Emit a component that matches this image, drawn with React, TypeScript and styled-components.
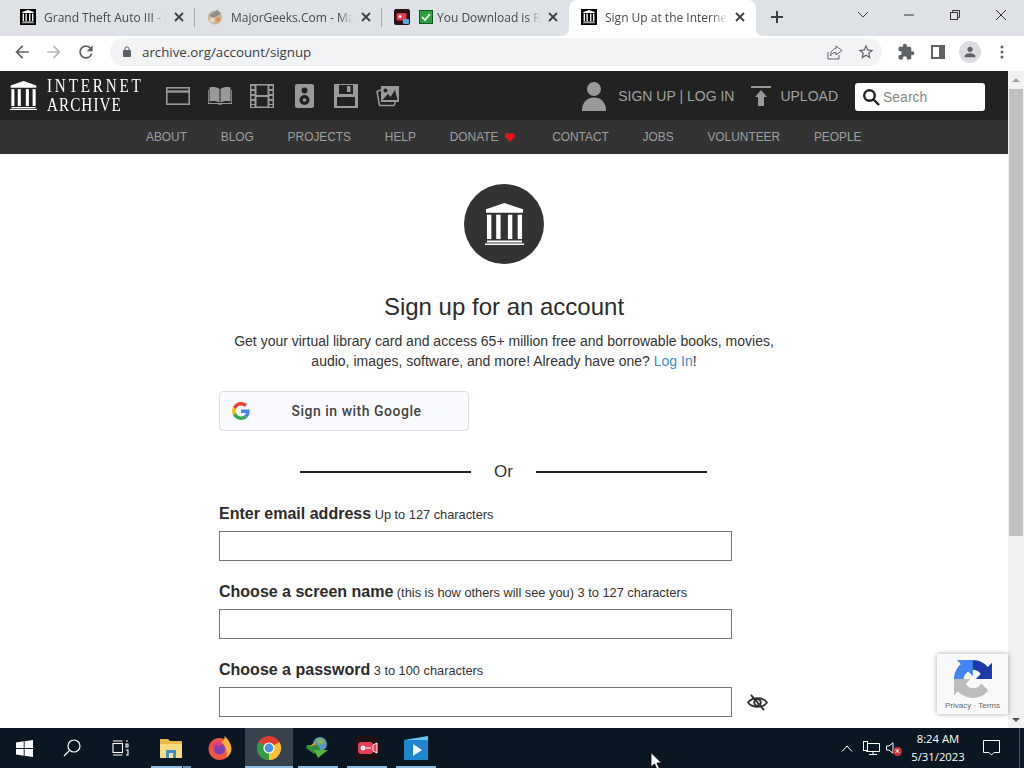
import styled, { createGlobalStyle } from 'styled-components'

const GlobalStyle = createGlobalStyle`
  html, body {
    margin: 0;
    padding: 0;
    height: 100%;
    overflow: hidden;
  }
  * {
    box-sizing: border-box;
  }
`

const Temple = ({ size, color }: { size: number; color: string }) => (
  <svg width={size} height={size * 1.1} viewBox='0 0 40 44' fill={color}>
    <path d='M20 0 L39 6.5 V10 H1 V6.5 Z' />
    <rect x='2' y='12' width='4.5' height='25' />
    <rect x='11.5' y='12' width='4.5' height='25' />
    <rect x='23.5' y='12' width='4.5' height='25' />
    <rect x='33.5' y='12' width='4.5' height='25' />
    <rect x='2' y='38.5' width='36' height='2' />
    <rect x='0' y='41.5' width='40' height='2.5' />
  </svg>
)

const Glyph = ({ d, size = 20, color = '#5f6368' }: { d: string; size?: number; color?: string }) => (
  <svg width={size} height={size} viewBox='0 0 24 24' fill={color}>
    <path d={d} />
  </svg>
)

const CloseX = () => (
  <svg width='10' height='10' viewBox='0 0 10 10' stroke='#3c4043' strokeWidth='1.8'>
    <path d='M1 1 L9 9 M9 1 L1 9' />
  </svg>
)

const tabs = [
  { title: 'Grand Theft Auto III - Playthrough', icon: 'temple', divider: true },
  { title: 'MajorGeeks.Com - MajorGeeks', icon: 'geeks', divider: true },
  { title: 'You Download is Ready', icon: 'rec' },
  { title: 'Sign Up at the Internet Archive', icon: 'temple', active: true },
]

const TabIcon = ({ kind }: { kind: string }) => {
  if (kind === 'temple') {
    return (
      <FaviconBox>
        <Temple size={12} color='#fff' />
      </FaviconBox>
    )
  }
  if (kind === 'geeks') {
    return (
      <svg width='16' height='16' viewBox='0 0 16 16'>
        <circle cx='8' cy='8.5' r='7' fill='#c9b595' />
        <path d='M2.5 6 L10.5 1 L14 4.5 L6 9 Z' fill='#8b8f8c' />
        <circle cx='5.5' cy='11' r='2.4' fill='#ecdcb8' />
        <circle cx='11' cy='10.5' r='2.2' fill='#d98f56' />
      </svg>
    )
  }
  return (
    <>
      <svg width='16' height='16' viewBox='0 0 16 16'>
        <rect width='16' height='16' rx='2' fill='#2a1118' />
        <rect x='2.5' y='4' width='10' height='7.5' rx='1.5' fill='#e8384f' />
        <circle cx='6' cy='7.5' r='1.5' fill='#fff' />
        <rect x='9' y='10' width='6' height='5' rx='1' fill='#5ba7e0' />
      </svg>
      <CheckBox width='14' height='14' viewBox='0 0 14 14'>
        <rect x='0.5' y='0.5' width='13' height='13' fill='#2f9e3f' stroke='#15551f' />
        <path d='M3 7 L6 10 L11 4' fill='none' stroke='#fff' strokeWidth='1.6' />
      </CheckBox>
    </>
  )
}

const siteIcons = [
  <svg key='web' width='24' height='18' viewBox='0 0 24 18' fill='none' stroke='#999' strokeWidth='1.6'>
    <rect x='0.8' y='0.8' width='22.4' height='16.4' />
    <path d='M1 4.5 H23' strokeWidth='2.4' />
  </svg>,
  <svg key='book' width='24' height='18' viewBox='0 0 24 18' fill='#999'>
    <path d='M1.5 0.5 C4.5 -0.5 9 0 11.5 2 V15.5 C9 14 4.5 13.5 1.5 14.5 Z M12.5 2 C15 0 19.5 -0.5 22.5 0.5 V14.5 C19.5 13.5 15 14 12.5 15.5 Z' />
    <path d='M0 3 V17 H9 C10 17 11 18 12 18 C13 18 14 17 15 17 H24 V3 H23.2 V16 H0.8 V3 Z' />
  </svg>,
  <svg key='film' width='24' height='24' viewBox='0 0 24 24' fill='#999'>
    <path d='M0 0 H24 V24 H0 Z M1.5 2 V5 H4.5 V2 Z M1.5 7 V10 H4.5 V7 Z M1.5 12 V15 H4.5 V12 Z M1.5 17 V20 H4.5 V17 Z M1.5 21 V23 H4.5 V21 Z M19.5 2 V5 H22.5 V2 Z M19.5 7 V10 H22.5 V7 Z M19.5 12 V15 H22.5 V12 Z M19.5 17 V20 H22.5 V17 Z M19.5 21 V23 H22.5 V21 Z M6.5 1.5 V11 H17.5 V1.5 Z M6.5 13 V22.5 H17.5 V13 Z' fillRule='evenodd' />
  </svg>,
  <svg key='audio' width='19' height='24' viewBox='0 0 19 24'>
    <rect width='19' height='24' rx='2' fill='#999' />
    <circle cx='9.5' cy='6.5' r='3' fill='#222' />
    <circle cx='9.5' cy='16' r='5' fill='#222' />
    <circle cx='9.5' cy='16' r='1.8' fill='#999' />
  </svg>,
  <svg key='disk' width='24' height='24' viewBox='0 0 24 24' fill='#999'>
    <path d='M0 0 H24 V24 H0 Z M5 1 V10 H19 V1 Z M3 13 V22 H21 V13 Z' fillRule='evenodd' />
    <rect x='13' y='2' width='3.5' height='6' />
  </svg>,
  <svg key='image' width='24' height='22' viewBox='0 0 24 22' fill='none' stroke='#999' strokeWidth='1.5'>
    <path d='M5 5 L1 6.5 L3.5 20.5 L18 20.5 L19.5 17' />
    <rect x='5' y='1' width='18' height='16' fill='#999' stroke='none' />
    <circle cx='9.5' cy='5.5' r='2' fill='#222' stroke='none' />
    <path d='M6.5 15 L12 9 L14.5 12 L19 5 L21.5 15 Z' fill='#222' stroke='none' />
  </svg>,
]

const navItems = ['ABOUT', 'BLOG', 'PROJECTS', 'HELP', 'DONATE', 'CONTACT', 'JOBS', 'VOLUNTEER', 'PEOPLE']

const App = () => (
  <>
    <GlobalStyle />
    <Screen>
      <TabStrip>
        {tabs.map((tab) => (
          <Tab key={tab.title} $active={!!tab.active} $divider={!!tab.divider}>
            <TabIcon kind={tab.icon} />
            <TabTitle>{tab.title}</TabTitle>
            <CloseX />
          </Tab>
        ))}
        <NewTab>
          <svg width='12' height='12' viewBox='0 0 12 12' stroke='#3c4043' strokeWidth='2'>
            <path d='M6 0 V12 M0 6 H12' />
          </svg>
        </NewTab>
        <WindowControls>
          <WindowButton>
            <svg width='12' height='8' viewBox='0 0 12 8' fill='none' stroke='#444' strokeWidth='1'>
              <path d='M1 1 L6 6 L11 1' />
            </svg>
          </WindowButton>
          <WindowButton>
            <svg width='10' height='2' viewBox='0 0 10 2' stroke='#333' strokeWidth='1'>
              <path d='M0 1 H10' />
            </svg>
          </WindowButton>
          <WindowButton>
            <svg width='10' height='10' viewBox='0 0 10 10' fill='none' stroke='#333' strokeWidth='1'>
              <rect x='0.5' y='2.5' width='7' height='7' />
              <path d='M2.5 2.5 V0.5 H9.5 V7.5 H7.5' />
            </svg>
          </WindowButton>
          <WindowButton>
            <svg width='12' height='12' viewBox='0 0 12 12' stroke='#333' strokeWidth='1'>
              <path d='M1 1 L11 11 M11 1 L1 11' />
            </svg>
          </WindowButton>
        </WindowControls>
      </TabStrip>

      <Toolbar>
        <ToolButton>
          <Glyph d='M20 11H7.83l5.59-5.59L12 4l-8 8 8 8 1.41-1.41L7.83 13H20v-2z' />
        </ToolButton>
        <ToolButton>
          <Glyph color='#b4b7bb' d='M4 11h12.17l-5.59-5.59L12 4l8 8-8 8-1.41-1.41L16.17 13H4v-2z' />
        </ToolButton>
        <ToolButton>
          <Glyph d='M17.65 6.35C16.2 4.9 14.21 4 12 4c-4.42 0-7.99 3.58-7.99 8s3.57 8 7.99 8c3.73 0 6.84-2.55 7.73-6h-2.08c-.82 2.33-3.04 4-5.65 4-3.31 0-6-2.69-6-6s2.69-6 6-6c1.66 0 3.14.69 4.22 1.78L13 11h7V4l-2.35 2.35z' />
        </ToolButton>
        <Omnibox>
          <Glyph size={12} d='M18 8h-1V6c0-2.76-2.24-5-5-5S7 3.24 7 6v2H6c-1.1 0-2 .9-2 2v10c0 1.1.9 2 2 2h12c1.1 0 2-.9 2-2V10c0-1.1-.9-2-2-2zM9 6c0-1.66 1.34-3 3-3s3 1.34 3 3v2H9V6z' />
          <Address>archive.org/account/signup</Address>
          <OmniActions>
            <svg width='16' height='16' viewBox='0 0 16 16' fill='none' stroke='#5f6368' strokeWidth='1'>
              <path d='M1 8 V15 H12 V11' />
              <path d='M9 2 L15 6.5 L9 11 V8.5 C6 8.5 4.5 10 3.5 12 C3.5 8 5.5 5 9 4.5 Z' />
            </svg>
            <Glyph size={18} d='M22 9.24l-7.19-.62L12 2 9.19 8.63 2 9.24l5.46 4.73L5.82 21 12 17.27 18.18 21l-1.63-7.03L22 9.24zM12 15.4l-3.76 2.27 1-4.28-3.32-2.88 4.38-.38L12 6.1l1.71 4.04 4.38.38-3.32 2.88 1 4.28L12 15.4z' />
          </OmniActions>
        </Omnibox>
        <ToolActions>
          <Glyph size={18} d='M20.5 11H19V7c0-1.1-.9-2-2-2h-4V3.5C13 2.12 11.88 1 10.5 1S8 2.12 8 3.5V5H4c-1.1 0-1.99.9-1.99 2v3.8H3.5c1.49 0 2.7 1.21 2.7 2.7s-1.21 2.7-2.7 2.7H2V20c0 1.1.9 2 2 2h3.8v-1.5c0-1.49 1.21-2.7 2.7-2.7 1.49 0 2.7 1.21 2.7 2.7V22H17c1.1 0 2-.9 2-2v-4h1.5c1.38 0 2.5-1.12 2.5-2.5S21.88 11 20.5 11z' />
          <svg width='14' height='14' viewBox='0 0 14 14'>
            <path d='M0 0 H14 V14 H0 Z M2 2 V12 H8 V2 Z' fill='#5f6368' fillRule='evenodd' />
          </svg>
          <Avatar>
            <Glyph size={16} d='M12 12c2.2 0 4-1.8 4-4s-1.8-4-4-4-4 1.8-4 4 1.8 4 4 4zm0 2c-2.7 0-8 1.3-8 4v2h16v-2c0-2.7-5.3-4-8-4z' />
          </Avatar>
          <svg width='4' height='14' viewBox='0 0 4 14' fill='#5f6368'>
            <circle cx='2' cy='2' r='1.5' />
            <circle cx='2' cy='7' r='1.5' />
            <circle cx='2' cy='12' r='1.5' />
          </svg>
        </ToolActions>
      </Toolbar>

      <Viewport>
        <Page>
          <TopBar>
            <Logo>
              <Temple size={27} color='#fff' />
              <LogoText>
                <LogoLine $spacing={3.5}>INTERNET</LogoLine>
                <LogoLine $spacing={1.3}>ARCHIVE</LogoLine>
              </LogoText>
            </Logo>
            <MediaIcons>
              {siteIcons.map((icon) => (
                <MediaIcon key={icon.key}>{icon}</MediaIcon>
              ))}
            </MediaIcons>
            <UserArea>
              <svg width='26' height='30' viewBox='0 0 28 32' fill='#999' preserveAspectRatio='none'>
                <circle cx='14' cy='8.5' r='7.5' />
                <path d='M1 32 C1 22 7 17.5 14 17.5 C21 17.5 27 22 27 32 Z' />
              </svg>
              <TopLink>SIGN UP | LOG IN</TopLink>
            </UserArea>
            <UploadArea>
              <svg width='20' height='20' viewBox='0 0 20 20' fill='#999'>
                <rect width='20' height='2' />
                <path d='M10 4 L16 11 H13 V20 H7 V11 H4 Z' />
              </svg>
              <TopLink>UPLOAD</TopLink>
            </UploadArea>
            <SearchBox>
              <svg width='18' height='18' viewBox='0 0 18 18' fill='none' stroke='#222' strokeWidth='2.4'>
                <circle cx='7.5' cy='7.5' r='5.3' />
                <path d='M11.5 11.5 L17 17' />
              </svg>
              <SearchText>Search</SearchText>
            </SearchBox>
          </TopBar>
          <NavBar>
            {navItems.map((item) => (
              <NavItem key={item}>
                {item}
                {item === 'DONATE' && (
                  <Heart width='10' height='9' viewBox='0 0 10 9' fill='#f0101c'>
                    <path d='M5 9 L0.6 4.4 C-0.6 2.6 0.4 0 2.6 0 C3.6 0 4.5 0.6 5 1.5 C5.5 0.6 6.4 0 7.4 0 C9.6 0 10.6 2.6 9.4 4.4 Z' />
                  </Heart>
                )}
              </NavItem>
            ))}
          </NavBar>

          <Form>
            <Badge>
              <Temple size={39} color='#fff' />
            </Badge>
            <Heading>Sign up for an account</Heading>
            <Intro>
              Get your virtual library card and access 65+ million free and borrowable books, movies, audio, images,
              software, and more! Already have one? <IntroLink>Log In</IntroLink>!
            </Intro>
            <GoogleButton>
              <svg width='18' height='18' viewBox='0 0 48 48'>
                <path fill='#EA4335' d='M24 9.5c3.54 0 6.71 1.22 9.21 3.6l6.85-6.85C35.9 2.38 30.47 0 24 0 14.62 0 6.51 5.38 2.56 13.22l7.98 6.19C12.43 13.72 17.74 9.5 24 9.5z' />
                <path fill='#4285F4' d='M46.98 24.55c0-1.57-.15-3.09-.38-4.55H24v9.02h12.94c-.58 2.96-2.26 5.48-4.78 7.18l7.73 6c4.51-4.18 7.09-10.36 7.09-17.65z' />
                <path fill='#FBBC05' d='M10.53 28.59c-.48-1.45-.76-2.99-.76-4.59s.27-3.14.76-4.59l-7.98-6.19C.92 16.46 0 20.12 0 24c0 3.88.92 7.54 2.56 10.78l7.97-6.19z' />
                <path fill='#34A853' d='M24 48c6.48 0 11.93-2.13 15.89-5.81l-7.73-6c-2.15 1.45-4.92 2.3-8.16 2.3-6.26 0-11.57-4.22-13.47-9.91l-7.98 6.19C6.51 42.62 14.62 48 24 48z' />
              </svg>
              <GoogleLabel>Sign in with Google</GoogleLabel>
            </GoogleButton>
            <OrRow>
              <OrLine />
              <OrText>Or</OrText>
              <OrLine />
            </OrRow>
            <Field>
              <FieldLabel>
                <strong>Enter email address</strong> Up to 127 characters
              </FieldLabel>
              <FieldInput />
            </Field>
            <Field>
              <FieldLabel>
                <strong>Choose a screen name</strong> (this is how others will see you) 3 to 127 characters
              </FieldLabel>
              <FieldInput />
            </Field>
            <Field>
              <FieldLabel>
                <strong>Choose a password</strong> 3 to 100 characters
              </FieldLabel>
              <PasswordRow>
                <FieldInput />
                <svg width='21' height='17' viewBox='0 0 22 18' fill='none' stroke='#333' strokeWidth='2'>
                  <path d='M1 9 C5 3 17 3 21 9 C17 15 5 15 1 9 Z' />
                  <circle cx='11' cy='9' r='3.5' />
                  <path d='M4 1 L18 17' />
                </svg>
              </PasswordRow>
            </Field>
          </Form>
          <Recaptcha>
            <svg width='38' height='38' viewBox='0 0 64 64'>
              <path fill='#1c3aa9' d='M64 31.955l-.033-1.37V4.687l-7.16 7.16C50.948 4.674 42.033.093 32.05.093c-10.4 0-19.622 4.96-25.458 12.64l11.736 11.86a15.55 15.55 0 0 1 4.754-5.334c2.05-1.6 4.952-2.906 8.968-2.906.485 0 .86.057 1.135.163 4.976.393 9.288 3.14 11.828 7.124l-8.307 8.307c10.522-.04 22.4-.066 27.295.005' />
              <path fill='#4285f4' d='M31.862.094l-1.37.033H4.594l7.16 7.16C4.58 13.147 0 22.06 0 32.046c0 10.4 4.96 19.622 12.64 25.458l11.86-11.736a15.55 15.55 0 0 1-5.334-4.754c-1.6-2.05-2.906-4.952-2.906-8.968 0-.485.057-.86.163-1.135.393-4.976 3.14-9.288 7.124-11.828l8.307 8.307c-.04-10.522-.066-22.4.005-27.295' />
              <path fill='#bdbdbd' d='M.001 32.045l.033 1.37V59.3l7.16-7.16c6.14 7.173 15.056 11.753 25.04 11.753 10.4 0 19.622-4.96 25.458-12.64L45.96 39.4a15.55 15.55 0 0 1-4.754 5.334c-2.05 1.6-4.952 2.906-8.968 2.906-.485 0-.86-.057-1.135-.163-4.976-.393-9.288-3.14-11.828-7.124l8.307-8.307C17.06 32.085 5.18 32.11.29 32.04' />
            </svg>
            <RecaptchaLinks>Privacy · Terms</RecaptchaLinks>
          </Recaptcha>
        </Page>
        <Scrollbar>
          <ScrollArrow $up />
          <ScrollTrack>
            <ScrollThumb />
          </ScrollTrack>
          <ScrollArrow />
        </Scrollbar>
      </Viewport>

      <Taskbar>
        <TaskItem>
          <svg width='17' height='17' viewBox='0 0 17 17' fill='#fff'>
            <path d='M0 2.4 L7.7 1.3 V8 H0 Z M8.6 1.2 L17 0 V8 H8.6 Z M0 9 H7.7 V15.7 L0 14.6 Z M8.6 9 H17 V17 L8.6 15.8 Z' />
          </svg>
        </TaskItem>
        <TaskItem>
          <svg width='18' height='18' viewBox='0 0 18 18' fill='none' stroke='#fff' strokeWidth='1.2'>
            <circle cx='11' cy='7' r='6' />
            <path d='M6.6 11.4 L1 17' />
          </svg>
        </TaskItem>
        <TaskItem>
          <svg width='17' height='16' viewBox='0 0 17 16' fill='none' stroke='#fff' strokeWidth='1.1'>
            <rect x='1' y='3.5' width='9.5' height='9' />
            <path d='M1 1 H10.5 M1 15 H10.5 M14 1 H16 M14 4 H16 V7 H14 Z M14 10 H16 V15 H14' />
          </svg>
        </TaskItem>
        <AppGroup>
          <AppItem $running $stacked>
            <svg width='22' height='20' viewBox='0 0 22 20'>
              <path d='M0 1 H8 L10 3 H22 V20 H0 Z' fill='#e9b949' />
              <rect y='6' width='22' height='14' fill='#fbdc7c' />
              <rect x='6' y='12' width='10' height='8' fill='#3f8fc9' />
              <rect x='9' y='15' width='4' height='5' fill='#f5e3a5' />
            </svg>
          </AppItem>
          <AppItem>
            <svg width='24' height='24' viewBox='0 0 24 24'>
              <circle cx='11.5' cy='13' r='11' fill='#f1543f' />
              <path d='M16.5 0 C20 3 23.5 8 23.5 13 C23.5 16 21.5 20 18 22 C20.5 16 17 8 13 6.5 C15.5 5.5 17 3 16.5 0 Z' fill='#fcb23b' />
              <circle cx='11.5' cy='13' r='5.5' fill='#7f3fb8' />
              <path d='M4 9 C7 5 12 5 15 8 L12 10.5 L8 9.5 L6 13 Z' fill='#e4397d' />
            </svg>
          </AppItem>
          <AppItem $active $running>
            <svg width='24' height='24' viewBox='0 0 24 24'>
              <circle cx='12' cy='12' r='12' fill='#e33b2e' />
              <path d='M12 12 L22.4 6 A12 12 0 0 1 12 24 Z' fill='#fbc02d' />
              <path d='M12 12 L12 24 A12 12 0 0 1 1.6 6 Z' fill='#2f9e44' />
              <circle cx='12' cy='12' r='5.6' fill='#fff' />
              <circle cx='12' cy='12' r='4.4' fill='#4a90e2' />
            </svg>
          </AppItem>
          <AppItem $running>
            <svg width='24' height='22' viewBox='0 0 24 22'>
              <circle cx='14' cy='7' r='7' fill='#5d94c8' />
              <path d='M10 2 C13 0 18 2 19 6 L13 8 Z' fill='#7fb356' />
              <path d='M12 8 H1 L0 11 L8 17 L14 13 Z' fill='#2e8f35' />
              <path d='M3 10 L9 5 L9 8 Z' fill='#e8a323' />
              <path d='M8 13 H22 L12 21 Z' fill='#55b53a' />
            </svg>
          </AppItem>
          <AppItem $running>
            <svg width='24' height='24' viewBox='0 0 24 24'>
              <rect width='24' height='24' rx='3' fill='#1e1217' />
              <rect x='3' y='6' width='15' height='12' rx='3' fill='#ea3d55' />
              <circle cx='8' cy='12' r='2.5' fill='#fff' />
              <path d='M11 12 H16 M18 9 L22 7 V17 L18 15 Z' stroke='#fff' fill='#ea3d55' />
            </svg>
          </AppItem>
          <AppItem $running>
            <svg width='24' height='24' viewBox='0 0 24 24'>
              <path d='M0 4 L24 0 V4 H0 Z' fill='#6cc5ef' />
              <rect y='4' width='24' height='20' fill='#1c86cf' />
              <path d='M9 8 L18 14 L9 20 Z' fill='#fff' />
            </svg>
          </AppItem>
        </AppGroup>
        <Tray>
          <TrayCell $width={24}>
            <svg width='12' height='7' viewBox='0 0 12 7' fill='none' stroke='#fff' strokeWidth='1'>
              <path d='M1 6.5 L6 1 L11 6.5' />
            </svg>
          </TrayCell>
          <TrayCell $width={24}>
            <svg width='17' height='14' viewBox='0 0 17 14' fill='none' stroke='#fff' strokeWidth='1'>
              <path d='M3.5 2.5 H16.5 V10.5 H3.5 Z M10 10.5 V13.5 M6 13.5 H14' />
              <rect x='0.5' y='0.5' width='4' height='9' fill='#0a1622' />
            </svg>
          </TrayCell>
          <TrayCell $width={24}>
            <VolumeIcon>
              <svg width='8' height='12' viewBox='0 0 8 12' fill='none' stroke='#fff' strokeWidth='1'>
                <path d='M0.5 4 H3 L7 0.8 V11.2 L3 8 H0.5 Z' />
              </svg>
              <Muted>×</Muted>
            </VolumeIcon>
          </TrayCell>
          <TrayCell $width={62}>
            <Clock>
              <span>8:24 AM</span>
              <span>5/31/2023</span>
            </Clock>
          </TrayCell>
          <TrayCell $width={44}>
            <svg width='17' height='16' viewBox='0 0 17 16' fill='none' stroke='#fff' strokeWidth='1'>
              <path d='M0.5 0.5 H16.5 V12.5 H11 L8.5 15 L6 12.5 H0.5 Z' />
            </svg>
          </TrayCell>
        </Tray>
        <ShowDesktop />
        <Cursor>
          <svg width='12' height='18' viewBox='0 0 12 18'>
            <path d='M1 0.5 V15 L4.5 12 L7 17.5 L9.5 16.5 L7 11 H11.5 Z' fill='#fff' stroke='#000' strokeWidth='0.8' />
          </svg>
        </Cursor>
      </Taskbar>
    </Screen>
  </>
)

const Screen = styled.div`
  width: 1024px;
  height: 768px;
  display: flex;
  flex-direction: column;
  overflow: hidden;
  background: #fff;
  font-family: 'Liberation Sans', Arial, sans-serif;
`

const TabStrip = styled.div`
  height: 36px;
  flex: none;
  display: flex;
  padding-left: 8px;
  background: #dee1e6;
`

const Tab = styled.div<{ $active: boolean; $divider: boolean }>`
  width: 187px;
  height: 36px;
  flex: none;
  display: flex;
  align-items: center;
  gap: 8px;
  position: relative;
  padding: 0 11px 2px 12px;
  background: ${(p) => (p.$active ? '#fff' : 'transparent')};
  border-radius: ${(p) => (p.$active ? '8px 8px 0 0' : '0')};

  &::before {
    content: '';
    display: ${(p) => (p.$active ? 'block' : 'none')};
    position: absolute;
    left: -8px;
    bottom: 0;
    width: 8px;
    height: 8px;
    background: radial-gradient(circle at 0 0, transparent 8px, #fff 8px);
  }

  &::after {
    content: '';
    display: ${(p) => (p.$divider || p.$active ? 'block' : 'none')};
    position: absolute;
    right: ${(p) => (p.$active ? '-8px' : '0')};
    top: ${(p) => (p.$active ? 'auto' : '8px')};
    bottom: ${(p) => (p.$active ? '0' : 'auto')};
    width: ${(p) => (p.$active ? '8px' : '1px')};
    height: ${(p) => (p.$active ? '8px' : '19px')};
    background: ${(p) => (p.$active ? 'radial-gradient(circle at 100% 0, transparent 8px, #fff 8px)' : '#a3a6ab')};
  }
`

const CheckBox = styled.svg`
  flex: none;
  margin: 0 -4px 0 1px;
`

const FaviconBox = styled.div`
  width: 16px;
  height: 16px;
  flex: none;
  display: flex;
  align-items: center;
  justify-content: center;
  background: #000;
`

const TabTitle = styled.div`
  flex: 1;
  min-width: 0;
  overflow: hidden;
  white-space: nowrap;
  font-family: 'Open Sans', sans-serif;
  font-size: 12px;
  color: #45494e;
  -webkit-mask-image: linear-gradient(to right, #000 88%, transparent 100%);
  mask-image: linear-gradient(to right, #000 88%, transparent 100%);
`

const NewTab = styled.div`
  width: 42px;
  padding-bottom: 2px;
  display: flex;
  align-items: center;
  justify-content: center;
`

const WindowControls = styled.div`
  margin-left: auto;
  display: flex;
`

const WindowButton = styled.div`
  width: 46px;
  height: 30px;
  display: flex;
  align-items: center;
  justify-content: center;
`

const Toolbar = styled.div`
  height: 35px;
  flex: none;
  display: flex;
  align-items: center;
  padding: 0 0 3px 6px;
  background: #fff;
`

const ToolButton = styled.div`
  width: 32px;
  height: 28px;
  flex: none;
  display: flex;
  align-items: center;
  justify-content: center;
`

const Omnibox = styled.div`
  width: 772px;
  height: 28px;
  margin-left: 8px;
  flex: none;
  display: flex;
  align-items: center;
  padding: 0 7px 0 11px;
  border-radius: 14px;
  background: #f1f3f4;
`

const Address = styled.div`
  margin-left: 9px;
  font-family: 'Open Sans', sans-serif;
  font-size: 13.3px;
  color: #3c4043;
`

const OmniActions = styled.div`
  margin-left: auto;
  display: flex;
  align-items: center;
  gap: 14px;
`

const ToolActions = styled.div`
  display: grid;
  grid-template-columns: repeat(4, 32px);
  align-items: center;
  justify-items: center;
  padding-left: 8px;
`

const Avatar = styled.div`
  width: 22px;
  height: 22px;
  display: flex;
  align-items: center;
  justify-content: center;
  border-radius: 50%;
  background: #dadce0;
`

const Viewport = styled.div`
  flex: 1;
  min-height: 0;
  display: flex;
  position: relative;
`

const Page = styled.div`
  flex: 1;
  min-width: 0;
  overflow: hidden;
`

const TopBar = styled.div`
  height: 49px;
  display: flex;
  align-items: center;
  padding: 0 23px 0 10px;
  background: #222;
`

const Logo = styled.div`
  display: flex;
  align-items: center;
  gap: 10px;
  color: #fff;
`

const LogoText = styled.div`
  width: 96px;
  display: flex;
  flex-direction: column;
  font-family: 'Liberation Serif', serif;
  font-size: 19px;
  line-height: 18.5px;
`

const LogoLine = styled.span<{ $spacing: number }>`
  letter-spacing: ${(p) => p.$spacing}px;
  white-space: nowrap;
  transform: scaleX(0.8);
  transform-origin: left center;
`

const MediaIcons = styled.div`
  margin-left: 23px;
  display: flex;
  align-items: center;
  gap: 18px;
`

const MediaIcon = styled.div`
  width: 24px;
  display: flex;
  align-items: center;
  justify-content: center;
`

const UserArea = styled.div`
  margin-left: auto;
  display: flex;
  align-items: center;
  gap: 11px;
  padding-top: 1px;
`

const UploadArea = styled.div`
  margin-left: 17px;
  display: flex;
  align-items: center;
  gap: 9px;
  padding-top: 1px;
`

const TopLink = styled.span`
  font-size: 14px;
  color: #a0a0a0;
`

const SearchBox = styled.div`
  width: 130px;
  height: 28px;
  margin: 3px 0 0 17px;
  display: flex;
  align-items: center;
  gap: 3px;
  padding-left: 7px;
  border-radius: 3px;
  background: #fff;
`

const SearchText = styled.span`
  font-size: 14px;
  color: #888;
`

const NavBar = styled.div`
  height: 34px;
  display: flex;
  align-items: center;
  gap: 33.8px;
  padding-left: 146px;
  background: #333;
`

const NavItem = styled.div`
  display: flex;
  align-items: center;
  gap: 7px;
  font-size: 11.9px;
  color: #a0a0a0;
`

const Heart = styled.svg`
  flex: none;
  margin-right: 3px;
`

const Form = styled.div`
  width: 570px;
  margin: 30px auto 0;
  display: flex;
  flex-direction: column;
`

const Badge = styled.div`
  width: 80px;
  height: 80px;
  align-self: center;
  display: flex;
  align-items: center;
  justify-content: center;
  border-radius: 50%;
  background: #333;
`

const Heading = styled.h1`
  margin: 28px 0 0;
  font-size: 24px;
  line-height: 30px;
  font-weight: 400;
  text-align: center;
  color: #2c2c2c;
`

const Intro = styled.p`
  margin: 9px 0 0;
  padding: 0 15px;
  font-size: 14px;
  line-height: 20px;
  text-align: center;
  color: #333;
`

const IntroLink = styled.span`
  color: #428bca;
`

const GoogleButton = styled.div`
  width: 250px;
  height: 40px;
  margin-top: 20px;
  display: flex;
  align-items: center;
  padding-left: 12px;
  border: 1px solid #dadce0;
  border-radius: 4px;
  background: #f8fafd;
`

const GoogleLabel = styled.span`
  flex: 1;
  padding-right: 5px;
  text-align: center;
  font-family: Roboto, sans-serif;
  font-size: 14px;
  font-weight: 500;
  letter-spacing: 0.5px;
  color: #444;
`

const OrRow = styled.div`
  width: 407px;
  margin: 27px 0 0 81px;
  display: flex;
  align-items: center;
  justify-content: space-between;
`

const OrLine = styled.div`
  width: 171px;
  height: 2px;
  background: #222;
`

const OrText = styled.span`
  font-size: 17px;
  line-height: 28px;
  color: #333;
`

const Field = styled.div`
  margin-top: 18px;
  & + & {
    margin-top: 21px;
  }
`

const FieldLabel = styled.div`
  height: 20px;
  margin-bottom: 7px;
  line-height: 20px;
  font-size: 12.8px;
  color: #333;

  strong {
    font-size: 16px;
    color: #2c2c2c;
  }
`

const FieldInput = styled.div`
  width: 513px;
  height: 30px;
  flex: none;
  border: 1px solid #767676;
  background: #fff;
`

const PasswordRow = styled.div`
  display: flex;
  align-items: center;
  gap: 15px;
`

const Recaptcha = styled.div`
  position: absolute;
  right: 16px;
  top: 583px;
  width: 71px;
  height: 60px;
  display: flex;
  flex-direction: column;
  align-items: center;
  padding-top: 6px;
  background: #f9f9f9;
  box-shadow: 0 0 5px rgba(0, 0, 0, 0.35);
`

const RecaptchaLinks = styled.div`
  margin-top: 3px;
  font-size: 8px;
  white-space: nowrap;
  color: #666;
`

const Scrollbar = styled.div`
  width: 16px;
  flex: none;
  display: flex;
  flex-direction: column;
  background: #f1f1f1;
`

const ScrollArrow = styled.div<{ $up?: boolean }>`
  height: 17px;
  flex: none;
  display: flex;
  align-items: center;
  justify-content: center;

  &::before {
    content: '';
    border-left: 4px solid transparent;
    border-right: 4px solid transparent;
    border-${(p) => (p.$up ? 'bottom' : 'top')}: 4px solid ${(p) => (p.$up ? '#a3a3a3' : '#505050')};
  }
`

const ScrollTrack = styled.div`
  flex: 1;
  padding: 1px 1px 0;
`

const ScrollThumb = styled.div`
  height: 447px;
  background: #c1c1c1;
`

const Taskbar = styled.div`
  height: 40px;
  flex: none;
  display: flex;
  position: relative;
  background: #0a1622;
`

const TaskItem = styled.div`
  width: 48px;
  display: flex;
  align-items: center;
  justify-content: center;
`

const AppGroup = styled.div`
  margin-left: 3px;
  display: flex;
  gap: 1px;
`

const AppItem = styled.div<{ $active?: boolean; $running?: boolean; $stacked?: boolean }>`
  width: 48px;
  height: 40px;
  display: flex;
  align-items: center;
  justify-content: center;
  position: relative;
  background: ${(p) => (p.$active ? '#36434d' : 'transparent')};

  &::after {
    content: '';
    display: ${(p) => (p.$running ? 'block' : 'none')};
    position: absolute;
    bottom: 0;
    left: ${(p) => (p.$active ? '0' : '4px')};
    right: ${(p) => (p.$active ? '0' : '4px')};
    height: 2px;
    background: ${(p) =>
      p.$stacked ? 'linear-gradient(to right, #8dbce4 31px, #0a1622 31px 32px, #6f93b3 32px)' : '#8dbce4'};
  }
`

const Tray = styled.div`
  margin-left: auto;
  display: flex;
  align-items: center;
  padding-right: 6px;
`

const TrayCell = styled.div<{ $width: number }>`
  width: ${(p) => p.$width}px;
  display: flex;
  align-items: center;
  justify-content: center;
`

const VolumeIcon = styled.div`
  width: 18px;
  display: flex;
  position: relative;
`

const Muted = styled.span`
  position: absolute;
  left: 7px;
  top: 5px;
  width: 9px;
  height: 9px;
  border-radius: 50%;
  font-size: 9px;
  line-height: 9px;
  text-align: center;
  color: #fff;
  background: #c8303f;
`

const Clock = styled.div`
  display: flex;
  flex-direction: column;
  align-items: center;
  gap: 2px;
  font-family: 'Open Sans', sans-serif;
  font-size: 11.3px;
  line-height: 16px;
  white-space: nowrap;
  color: #fff;
`

const ShowDesktop = styled.div`
  width: 5px;
  border-left: 1px solid #4a5560;
`

const Cursor = styled.div`
  position: absolute;
  left: 650px;
  top: 24px;
`

export default App
